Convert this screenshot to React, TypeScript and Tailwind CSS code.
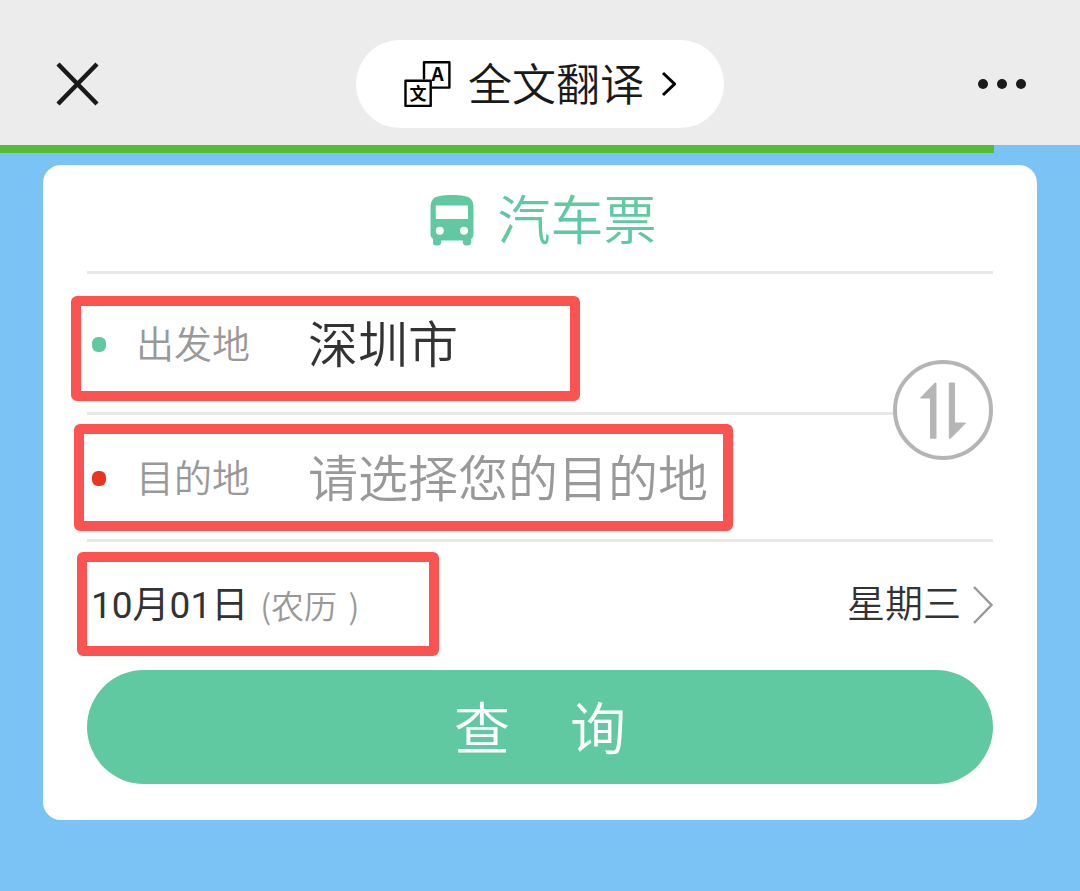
import { useState } from 'react'

const FONT = "font-['Noto_Sans_CJK_SC','Noto_Sans',sans-serif]"

function TranslateIcon() {
  return (
    <svg width="48" height="48" viewBox="0 0 48 48" aria-hidden="true">
      <g fill="none" stroke="#000" strokeWidth="2.4" strokeLinejoin="round">
        <path d="M20 19.5V2.3h25.4v25.3H28" />
        <rect x="1.5" y="20.7" width="25.2" height="25.2" />
      </g>
      <text x="33.5" y="21" textAnchor="middle" fontSize="19" fontWeight="700">A</text>
      <text x="14.1" y="39.6" textAnchor="middle" fontSize="17" fontWeight="700">文</text>
    </svg>
  )
}

function BusIcon() {
  return (
    <svg className="mt-1" width="44" height="52" viewBox="0 0 44 52" aria-hidden="true">
      <path
        fill="#61c9a1"
        fillRule="evenodd"
        d="M22 1C32 1 38 2 41 5Q43.5 8 43.5 12V41Q43.5 43.5 41.2 45V48.5Q41 51.5 38 51.5H36Q33.2 51.5 32.8 48.5V46.5H11.2V48.5Q11 51.5 8 51.5H6Q3.2 51.5 3 48.5V45Q.5 43.5 .5 41V12Q.5 8 3 5C6 2 12 1 22 1ZM5.8 11.5V25H38V11.5ZM9.8 32.8A4 4 0 1 0 9.8 40.8A4 4 0 1 0 9.8 32.8ZM34 32.8A4 4 0 1 0 34 40.8A4 4 0 1 0 34 32.8Z"
      />
    </svg>
  )
}

function SwapIcon() {
  return (
    <svg width="100" height="100" viewBox="0 0 100 100" aria-hidden="true">
      <circle cx="50" cy="50" r="48" fill="#fff" stroke="#b5b5b5" strokeWidth="4" />
      <g fill="#b5b5b5" stroke="#b5b5b5" strokeWidth="1" strokeLinejoin="round">
        <path d="M42 23H43V78.2H37.5V38H27.5Z" />
        <path d="M56.3 23H61.5V63H72.5L57.5 78.2H56.3Z" />
      </g>
    </svg>
  )
}

interface PlaceFieldProps {
  id: string
  label: string
  value: string
  placeholder?: string
  dotClass: string
  onChange: (value: string) => void
}

function PlaceField({ id, label, value, placeholder, dotClass, onChange }: PlaceFieldProps) {
  return (
    <div className="flex h-full items-center">
      <span className={`ml-[5px] mt-[2px] h-[15px] w-[14px] shrink-0 rounded-[6px] ${dotClass}`} />
      <label htmlFor={id} className="ml-[30px] w-[172px] shrink-0 pb-[2px] text-[38px] leading-none text-[#999]">
        {label}
      </label>
      <input
        id={id}
        type="text"
        value={value}
        placeholder={placeholder}
        onChange={e => onChange(e.target.value)}
        className="h-20 w-[480px] min-w-0 bg-transparent pb-1 text-[50px] text-[#333] outline-none placeholder:text-[#999] placeholder:opacity-100"
      />
    </div>
  )
}

export default function App() {
  const [from, setFrom] = useState('深圳市')
  const [to, setTo] = useState('')

  const swap = () => {
    setFrom(to)
    setTo(from)
  }

  return (
    <div className={`min-h-screen bg-[#7bc3f4] font-[350] ${FONT}`}>
      {/* Browser bar */}
      <header className="flex h-[145px] items-center justify-between bg-[#ececec] px-[52px] pt-[22px]">
        <button type="button" aria-label="关闭" className="flex w-[52px]">
          <svg className="ml-1" width="43" height="44" viewBox="0 0 43 44" fill="none" stroke="#1a1a1a" strokeWidth="4.5">
            <path d="M2 2L41 42M41 2L2 42" />
          </svg>
        </button>
        <button type="button" className="flex h-[88px] items-center rounded-full bg-white px-12 text-[#1a1a1a]">
          <TranslateIcon />
          <span className="ml-4 pb-1 text-[44px] leading-none">全文翻译</span>
          <svg className="ml-4" width="16" height="26" viewBox="0 0 16 26" fill="none" stroke="#000" strokeWidth="3">
            <path d="M3 2L14.5 13L3 24" />
          </svg>
        </button>
        <button type="button" aria-label="更多" className="flex w-[52px] justify-center gap-[9px]">
          <span className="size-[10px] shrink-0 rounded-full bg-[#1a1a1a]" />
          <span className="size-[10px] shrink-0 rounded-full bg-[#1a1a1a]" />
          <span className="size-[10px] shrink-0 rounded-full bg-[#1a1a1a]" />
        </button>
      </header>
      <div className="h-2 w-[92%] bg-[#56bb37]" />

      <main className="px-[43px] pb-[71px] pt-3">
        <form className="rounded-[18px] bg-white px-11 pb-9" onSubmit={e => e.preventDefault()}>
          <h1 className="flex h-[109px] items-center justify-center gap-6 border-b-[3px] border-[#e8e8e8] pl-[6px] text-[53px] leading-none text-[#61c9a1]">
            <BusIcon />
            <span className="pb-[2px]">汽车票</span>
          </h1>

          {/* Departure and destination */}
          <div className="relative">
            <div className="relative h-[141px] border-b-[3px] border-[#e8e8e8]">
              <PlaceField id="from" label="出发地" value={from} dotClass="bg-[#61c9a1]" onChange={setFrom} />
              <div className="pointer-events-none absolute -left-4 top-[22px] h-[105px] w-[509px] rounded-[6px] border-[10px] border-[#fb5252]" />
            </div>
            <div className="relative h-[127px] border-b-[3px] border-[#e8e8e8]">
              <PlaceField
                id="to"
                label="目的地"
                value={to}
                placeholder="请选择您的目的地"
                dotClass="bg-[#ea3323]"
                onChange={setTo}
              />
              <div className="pointer-events-none absolute -left-[13px] top-[9px] h-[107px] w-[659px] rounded-[6px] border-[10px] border-[#fb5252]" />
            </div>
            <button type="button" aria-label="交换" onClick={swap} className="absolute right-0 top-[86px]">
              <SwapIcon />
            </button>
          </div>

          {/* Date */}
          <div className="relative h-32">
            <button type="button" className="flex h-full w-full items-center pb-[2px] pl-1 text-[38px] leading-none text-[#333]">
              <span className="font-['Roboto','Noto_Sans_CJK_SC',sans-serif] text-[37px] font-normal">10月01日</span>
              <span className="ml-3 whitespace-pre text-[33px] text-[#999]">
                (农历 <span className="ml-1">)</span>
              </span>
              <span className="ml-auto pb-2">星期三</span>
              <svg className="ml-3" width="20" height="38" viewBox="0 0 20 38" fill="none" stroke="#999" strokeWidth="2.5">
                <path d="M1 1L18.5 19L1 37" />
              </svg>
            </button>
            <div className="pointer-events-none absolute -left-[10px] top-[10px] h-[104px] w-[362px] rounded-[6px] border-[10px] border-[#fb5252]" />
          </div>

          <button type="submit" className="flex h-[114px] w-full items-center justify-center gap-[60px] rounded-full bg-[#61c9a1] pb-1 text-[56px] leading-none text-white">
            <span>查</span>
            <span>询</span>
          </button>
        </form>
      </main>
    </div>
  )
}
